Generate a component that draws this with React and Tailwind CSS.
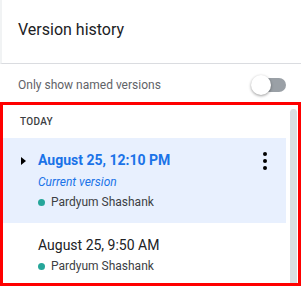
import React from "react";

function Toggle() {
  return (
    <div className="relative w-[35px] h-[20px] shrink-0">
      <div className="absolute left-[1px] top-[3px] w-[34px] h-[14px] rounded-full bg-[#9aa0a6]" />
      <div className="absolute left-0 top-0 w-[20px] h-[20px] rounded-full bg-white shadow-[0_1px_3px_rgba(0,0,0,0.4)]" />
    </div>
  );
}

function Author({ name }) {
  return (
    <div className="flex items-center gap-[6px] h-4">
      <span className="w-[7px] h-[7px] rounded-full bg-[#26a69a]" />
      <span className="text-[12px] leading-4 text-[#3c4043]">{name}</span>
    </div>
  );
}

export default function App() {
  return (
    <div
      className="w-[301px] h-[286px] bg-white overflow-hidden flex flex-col"
      style={{ fontFamily: "Roboto, 'Liberation Sans', sans-serif" }}
    >
      {/* header */}
      <div className="pl-[16px] pt-[18px] pb-[21px] border-l-2 border-[#f1f3f4] border-b border-b-[#dadce0]">
        <h1 className="text-[16px] leading-6 text-[#202124]">Version history</h1>
      </div>

      {/* named versions filter */}
      <div className="flex items-center justify-between pl-[18px] pr-[15px] pt-[11px] pb-[7px]">
        <span className="text-[12px] leading-5 text-[#5f6368]">Only show named versions</span>
        <Toggle />
      </div>

      {/* version list */}
      <div className="flex-1 flex border-[3px] border-[#ff0000] overflow-hidden">
        <div className="flex-1 flex flex-col">
          <div className="pl-[17px] pt-[9px] pb-[8px] text-[10px] leading-4 font-medium tracking-[0.3px] text-[#3c4043]">
            TODAY
          </div>

          <div className="flex items-start bg-[#e8f0fe] pt-[12px] pb-[13px]">
            <div className="w-[35px] shrink-0 h-5 flex items-center pl-[18px]">
              <span className="w-0 h-0 border-y-[4.5px] border-y-transparent border-l-[5px] border-l-black mt-[2px]" />
            </div>
            <div className="flex-1 flex flex-col">
              <div className="text-[14px] leading-5 font-bold text-[#1a73e8]">August 25, 12:10 PM</div>
              <div className="mt-[4px] text-[12px] leading-4 italic text-[#1a73e8]">Current version</div>
              <div className="mt-[4px]">
                <Author name="Pardyum Shashank" />
              </div>
            </div>
            <div className="flex flex-col gap-[3px] mt-[2px] pr-[19px]">
              <span className="w-[4px] h-[4px] rounded-full bg-black" />
              <span className="w-[4px] h-[4px] rounded-full bg-black" />
              <span className="w-[4px] h-[4px] rounded-full bg-black" />
            </div>
          </div>

          <div className="flex pt-[12px] pl-[35px]">
            <div className="flex flex-col">
              <div className="text-[14px] leading-5 text-[#202124]">August 25, 9:50 AM</div>
              <div className="mt-[3px]">
                <Author name="Pardyum Shashank" />
              </div>
            </div>
          </div>
        </div>

        {/* scrollbar */}
        <div className="w-[12px] shrink-0 flex pl-[4px] pr-px pt-[4px]">
          <div className="w-[7px] flex-1 rounded-t-full bg-[#dadce0]" />
        </div>
      </div>
    </div>
  );
}
